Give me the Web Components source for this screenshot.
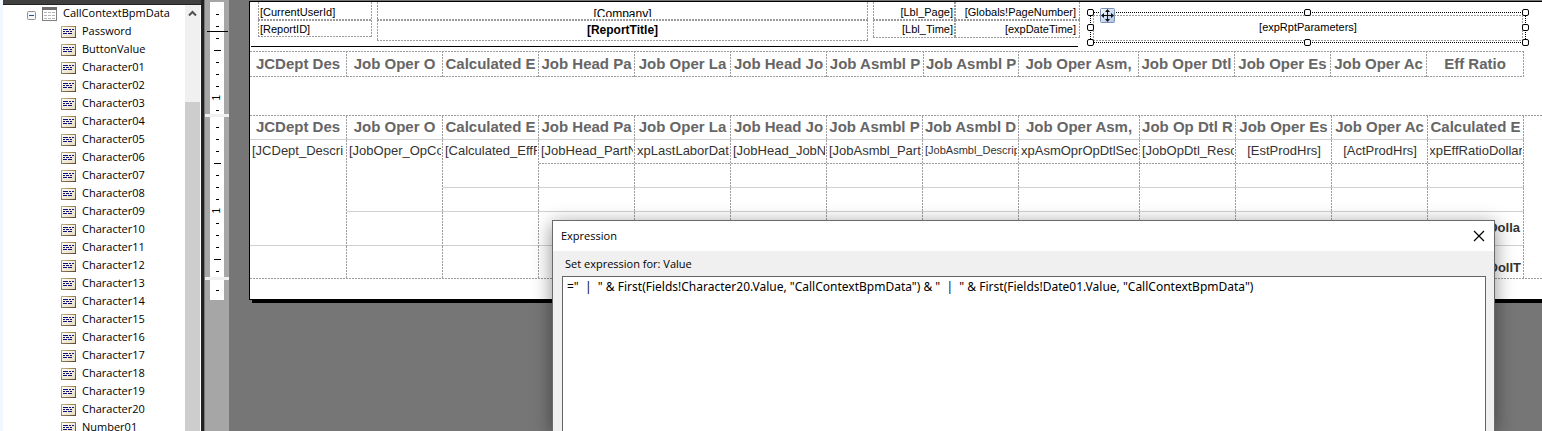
<!DOCTYPE html>
<html lang="en">
<head>
<meta charset="utf-8">
<title>Report Designer</title>
<style>
html,body{margin:0;height:100%}
body{overflow:hidden;font-family:"Open Sans","Noto Sans",sans-serif;font-size:11px;color:#000;background:#767676}
</style>
</head>
<body>
<report-designer></report-designer>
<script>
const define = (name, html, setup) => {
  const t = document.createElement('template');
  t.innerHTML = html;
  customElements.define(name, class extends HTMLElement {
    constructor() {
      super();
      this.attachShadow({ mode: 'open' }).append(t.content.cloneNode(true));
    }
    connectedCallback() {
      if (setup && !this.ready) { this.ready = true; setup(this, this.shadowRoot); }
    }
  });
};

const DASH = `
  --dash-x:repeating-linear-gradient(90deg,#9c9c9c 0 2px,transparent 2px 3px);
  --dash-y:repeating-linear-gradient(180deg,#9c9c9c 0 2px,transparent 2px 3px);`;

/* ---------- dataset tree ---------- */
define('tree-field', `
<style>
:host{display:flex;align-items:center;height:18px;padding-left:58px;gap:6px;white-space:nowrap}
svg{flex:none;display:block}
span{align-self:flex-start;line-height:16px}
</style>
<svg width="15" height="12" viewBox="0 0 15 12">
  <defs>
    <linearGradient id="e" x1="0" y1="0" x2="1" y2="1"><stop offset="0" stop-color="#c9b27c"/><stop offset="1" stop-color="#55442f"/></linearGradient>
    <linearGradient id="f" x1="0" y1="0" x2="1" y2="1"><stop offset="0" stop-color="#fffef8"/><stop offset="1" stop-color="#e6dcc0"/></linearGradient>
  </defs>
  <rect width="15" height="12" fill="url(#e)"/><rect x="1" y="1" width="13" height="10" fill="url(#f)"/>
  <path d="M2 3.5h5M8 3.5h2M11 3.5h2M2 5.5h2M5 5.5h3M9 5.5h2M2 7.5h4M7 7.5h4" stroke="#10107c"/>
</svg>
<span><slot></slot></span>`);

define('data-tree', `
<style>
:host{display:grid;grid-template-columns:1fr 15px;height:100%;min-width:0;background:#fff}
.list{overflow:hidden}
.root{display:flex;align-items:center;height:18px;padding-left:24px;white-space:nowrap}
.root svg{display:block}
.root span{margin-left:6px;align-self:flex-start;line-height:16px}
button{all:unset;display:block;width:9px;height:9px;margin:2px 6px 0 0}
.bar{background:#f0f0f0;display:flex;flex-direction:column}
.bar button{width:15px;height:17px;margin:0;display:grid;place-items:center}
.thumb{margin-top:80px;flex:1;background:#cdcdcd}
</style>
<div class="list">
  <div class="root">
    <button aria-label="Collapse"><svg width="9" height="9"><rect x=".5" y=".5" width="8" height="8" rx="1" fill="#f6f6f6" stroke="#919191"/><path d="M2 4.5h5" stroke="#2b4fa0"/></svg></button>
    <svg width="15" height="14"><rect x=".5" y=".5" width="14" height="13" fill="#fff" stroke="#808080"/><path d="M0 1.5h15" stroke="#6e6e6e" stroke-width="3"/><path d="M2 5.5h3M6 5.5h3M10 5.5h3M2 8.5h3M6 8.5h3M10 8.5h3M2 11.5h3M6 11.5h3M10 11.5h3" stroke="#b4b4b4"/></svg>
    <span>CallContextBpmData</span>
  </div>
  <div class="fields"></div>
</div>
<div class="bar"><button aria-label="Scroll up"><svg width="9" height="7"><path d="M1 5.5 4.5 2 8 5.5" fill="none" stroke="#505050" stroke-width="2"/></svg></button><div class="thumb"></div></div>`,
(el, root) => {
  const names = ['Password', 'ButtonValue'];
  for (let i = 1; i <= 20; i++) names.push('Character' + String(i).padStart(2, '0'));
  names.push('Number01');
  for (const n of names) {
    const f = document.createElement('tree-field');
    f.textContent = n;
    root.querySelector('.fields').append(f);
  }
});

/* ---------- vertical ruler ---------- */
define('ruler-section', `
<style>
:host{display:block;background:#fff;margin:0 5px;overflow:hidden;box-sizing:border-box}
div{height:12px;display:grid;place-items:center}
i{display:block;width:3px;height:1px;background:#000}
.half{width:7px}
b{font:10px/12px "Liberation Sans",sans-serif;writing-mode:vertical-rl;transform:rotate(180deg)}
</style>`,
(el, root) => {
  const n = +el.getAttribute('ticks');
  for (let i = 1; i <= n; i++) {
    const d = document.createElement('div');
    if (i % 8 === 0) { const b = document.createElement('b'); b.textContent = '1'; d.append(b); }
    else { const t = document.createElement('i'); if (i % 4 === 0) t.className = 'half'; d.append(t); }
    root.append(d);
  }
});

define('page-ruler', `
<style>
:host{display:block;position:relative;background:#a6a6a6;border-left:1px solid #767676;padding-top:2px}
.a{height:112px;padding-top:6px}
.b{height:160px;padding-top:4px}
.c{height:20px;padding-top:4px}
hr{border:0;margin:0;height:3px;background:#f0f0f0}
.mark{position:absolute;left:2px;right:1px;top:31px;height:1px;background:#000}
</style>
<ruler-section class="a" ticks="9"></ruler-section><hr>
<ruler-section class="b" ticks="13"></ruler-section><hr>
<ruler-section class="c" ticks="1"></ruler-section>
<div class="mark"></div>`);

/* ---------- page header items ---------- */
define('text-box', `
<style>
:host{${DASH}display:block;box-sizing:border-box;padding:0 2px;overflow:hidden;white-space:nowrap;font:11px/15px "Liberation Sans",sans-serif;
background:var(--dash-y) 0 0/1px 100% no-repeat,var(--dash-y) 100% 0/1px 100% no-repeat,var(--dash-x) 0 100%/100% 1px no-repeat,var(--dash-x) 0 0/100% var(--top,1px) no-repeat}
</style><slot></slot>`);

define('page-header', `
<style>
:host{${DASH}display:flex;padding:0 16px 0 8px;height:49px;box-sizing:border-box}
.left{flex:1}
.items{display:flex;gap:5px;height:39px;align-items:flex-start}
.user{width:114px}
.title{flex:1;text-align:center}
.info{display:grid;grid-template-columns:82px 125px;text-align:right}
.first{--top:0px;height:18px;line-height:20px}
.second{height:18px;line-height:18px}
.user .second{height:17px}
.title .first{font-size:12px;line-height:24px}
.title .second{height:21px;font-size:12px;line-height:20px;font-weight:bold}
.info .wide{padding-right:4px}
.clip{display:block;height:15px;overflow:hidden}
hr{border:0;background:#000;height:1px;margin:5px 2px 0 -7px}
.sel{position:relative;flex:none;width:436px;height:31px;margin:10px 0 0 10px;box-sizing:border-box;padding:3px;
background:repeating-linear-gradient(90deg,#000 0 1px,transparent 1px 2px) 0 0/100% 1px no-repeat,repeating-linear-gradient(90deg,#000 0 1px,transparent 1px 2px) 0 100%/100% 1px no-repeat,repeating-linear-gradient(#000 0 1px,transparent 1px 2px) 0 0/1px 100% no-repeat,repeating-linear-gradient(#000 0 1px,transparent 1px 2px) 100% 0/1px 100% no-repeat}
.sel text-box{height:26px;line-height:24px;text-align:center}
.h{position:absolute;width:7px;height:7px;box-sizing:border-box;border:1px solid #000;border-radius:2px;background:#fff;margin:-3px}
.n{top:0}.m{top:15px}.s{top:30px}
.w{left:0}.c{left:calc(50% - 1px)}.e{left:calc(100% - 1px)}
.move{all:unset;position:absolute;left:10px;top:-4px;width:15px;height:15px}
.move svg{display:block}
</style>
<div class="left">
  <div class="items">
    <div class="user"><text-box class="first">[CurrentUserId]</text-box><text-box class="second">[ReportID]</text-box></div>
    <div class="title"><text-box class="first"><span class="clip">[Company]</span></text-box><text-box class="second">[ReportTitle]</text-box></div>
    <div class="info"><text-box class="first">[Lbl_Page]</text-box><text-box class="first wide">[Globals!PageNumber]</text-box><text-box class="second">[Lbl_Time]</text-box><text-box class="second wide">[expDateTime]</text-box></div>
  </div>
  <hr>
</div>
<div class="sel">
  <text-box>[expRptParameters]</text-box>
  <i class="h n w"></i><i class="h n c"></i><i class="h n e"></i>
  <i class="h m w"></i><i class="h m e"></i>
  <i class="h s w"></i><i class="h s c"></i><i class="h s e"></i>
  <button class="move" aria-label="Move item"><svg width="15" height="15" viewBox="0 0 15 15"><defs><linearGradient id="g" x1="0" y1="0" x2="1" y2="1"><stop offset="0" stop-color="#fbfdff"/><stop offset="1" stop-color="#a9bfe2"/></linearGradient></defs><rect x=".5" y=".5" width="14" height="14" rx="1" fill="url(#g)" stroke="#7c93b8"/><path d="M7.5 3v9M3 7.5h9" stroke="#111"/><path d="M7.5 1 10 4H5zM7.5 14 5 11h5zM1 7.5 4 5v5zM14 7.5 11 10V5z" fill="#111"/></svg></button>
</div>`);

/* ---------- tablix ---------- */
const TABLE = `
:host{${DASH}display:block}
table{width:100%;table-layout:fixed;border-collapse:separate;border-spacing:0;font:13px/16px "Liberation Sans",sans-serif;color:#333}
th,td{padding:0 2px;overflow:hidden;white-space:nowrap;text-align:center;vertical-align:top;background:var(--dash-y) 100% 0/1px 100% no-repeat,var(--line,var(--dash-x)) 0 100%/100% 1px no-repeat}
th{padding:0 3px 0 2px;font-size:15px;line-height:22px;font-weight:bold;color:#666}
.w97{width:97px}.w95{width:95px}.w120{width:120px}.w121{width:121px}
.cell{display:flex;justify-content:center;overflow:hidden}`;

define('header-tablix', `
<style>${TABLE}
:host{padding-right:18px}
table{background:var(--dash-x) 0 0/100% 1px no-repeat}
tr{height:26px}
th{line-height:26px;height:26px}
</style>
<table><colgroup><col class="w97"><col><col><col><col><col><col class="w97"><col class="w95"><col class="w120"><col><col><col><col class="w97"></colgroup><thead><tr></tr></thead></table>`,
(el, root) => {
  root.querySelector('tr').innerHTML = ['JCDept Des', 'Job Oper O', 'Calculated E', 'Job Head Pa', 'Job Oper La', 'Job Head Jo', 'Job Asmbl P', 'Job Asmbl P', 'Job Oper Asm,', 'Job Oper Dtl', 'Job Oper Es', 'Job Oper Ac', 'Eff Ratio']
    .map(t => `<th scope="col">${t}</th>`).join('');
});

define('detail-tablix', `
<style>${TABLE}
:host{padding-right:18px;background:var(--dash-x) 0 0/100% 1px no-repeat,var(--dash-x) 0 100%/100% 1px no-repeat;padding-top:1px}
.solid{--line:linear-gradient(#d0d0d0,#d0d0d0)}
th{height:24px}
.r{height:24px}.r5{height:34px}
.r6{height:33px;--line:linear-gradient(transparent,transparent)}
tbody td{line-height:22px}
.small{font-size:11px;line-height:20px}
.l{justify-content:flex-start}
.e{justify-content:flex-end}
.total{font-weight:bold;line-height:32px;padding-right:2px}
.last{line-height:44px;height:32px;padding-right:1px}
</style>
<table><colgroup><col class="w97"><col><col><col><col><col><col><col><col class="w121"><col><col><col><col></colgroup>
<thead><tr class="r solid head"></tr></thead><tbody></tbody></table>`,
(el, root) => {
  root.querySelector('.head').innerHTML = ['JCDept Des', 'Job Oper O', 'Calculated E', 'Job Head Pa', 'Job Oper La', 'Job Head Jo', 'Job Asmbl P', 'Job Asmbl D', 'Job Oper Asm,', 'Job Op Dtl R', 'Job Oper Es', 'Job Oper Ac', 'Calculated E']
    .map(t => `<th scope="col">${t}</th>`).join('');
  const cell = (t, cls = '', attr = '') => `<td ${attr}><div class="cell ${cls}">${t}</div></td>`;
  const blank = n => '<td></td>'.repeat(n);
  root.querySelector('tbody').innerHTML =
    '<tr class="r">' +
      cell('[JCDept_Descri', 'l', 'rowspan="4" class="solid"') + cell('[JobOper_OpCo', 'l', 'rowspan="3" class="solid"') +
      cell('[Calculated_EffF', 'l', 'rowspan="2" class="solid"') + cell('[JobHead_PartN', 'l') + cell('xpLastLaborDat') +
      cell('[JobHead_JobNu', 'l') + cell('[JobAsmbl_Part', 'l') + cell('[JobAsmbl_Descrip', 'l small') + cell('xpAsmOprOpDtlSec') +
      cell('[JobOpDtl_Reso', 'l') + cell('[EstProdHrs]') + cell('[ActProdHrs]') + cell('xpEffRatioDollar') +
    '</tr><tr class="r solid">' + blank(10) +
    '</tr><tr class="r solid">' + blank(11) +
    '</tr><tr class="r5 solid">' + blank(11) + cell('Dolla', 'e total') +
    '</tr><tr class="r6">' + blank(12) + cell('DollT', 'e total last') + '</tr>';
});

define('report-page', `
<style>
:host{display:block;background:#fff;border:1px solid #000;border-right:0;box-shadow:3px 3px 0 #000}
.gap{height:38px}
.footer{height:20px}
</style>
<page-header></page-header>
<header-tablix></header-tablix>
<div class="gap"></div>
<detail-tablix></detail-tablix>
<div class="footer"></div>`);

/* ---------- expression dialog ---------- */
define('expression-dialog', `
<style>
:host{display:flex;flex-direction:column;box-sizing:border-box;background:#f0f0f0;border:1px solid #6a6a6a;border-bottom:0;box-shadow:0 4px 18px rgba(0,0,0,.45)}
header{display:flex;justify-content:space-between;align-items:center;background:#fff;height:30px;padding:0 9px 0 8px;line-height:16px}
header button{all:unset;width:12px;height:12px}
header svg{display:block}
.body{flex:1;display:flex;flex-direction:column;padding:4px 8px 0 9px}
label{line-height:18px;padding-left:3px;margin-bottom:3px}
textarea{flex:1;box-sizing:border-box;width:100%;resize:none;border:1px solid #646464;border-bottom:0;border-radius:0;outline:0;margin:0;padding:1px 4px;background:#fff;color:#000;font:12px/18px "Noto Sans",sans-serif;overflow:hidden;white-space:pre-wrap}
</style>
<header><span>Expression</span><button aria-label="Close"><svg width="12" height="12"><path d="M1 1 11 11M11 1 1 11" stroke="#000" stroke-width="1.2"/></svg></button></header>
<div class="body"><label for="x">Set expression for: Value</label>
<textarea id="x" spellcheck="false">=" &nbsp;| &nbsp;" &amp; First(Fields!Character20.Value, "CallContextBpmData") &amp; " &nbsp;| &nbsp;" &amp; First(Fields!Date01.Value, "CallContextBpmData")</textarea></div>`);

/* ---------- application frame ---------- */
define('report-designer', `
<style>
:host{display:grid;grid-template-columns:204px 25px 1fr;height:100vh;overflow:hidden;position:relative}
.side{box-sizing:border-box;height:100vh;border-left:3px solid #f3f7ff;background:#222;padding-right:3px;min-width:0;overflow:hidden}
.side .top{height:4px;background:#404040;border-bottom:1px solid #222}
data-tree{border-right:1px solid #fff;height:calc(100vh - 5px)}
.surface{padding:1px 0 0 20px;overflow:hidden}
expression-dialog{position:absolute;left:552px;right:47px;top:220px;bottom:0}
</style>
<div class="side"><div class="top"></div><data-tree></data-tree></div>
<page-ruler></page-ruler>
<div class="surface"><report-page></report-page></div>
<expression-dialog></expression-dialog>`);
</script>
</body>
</html>
